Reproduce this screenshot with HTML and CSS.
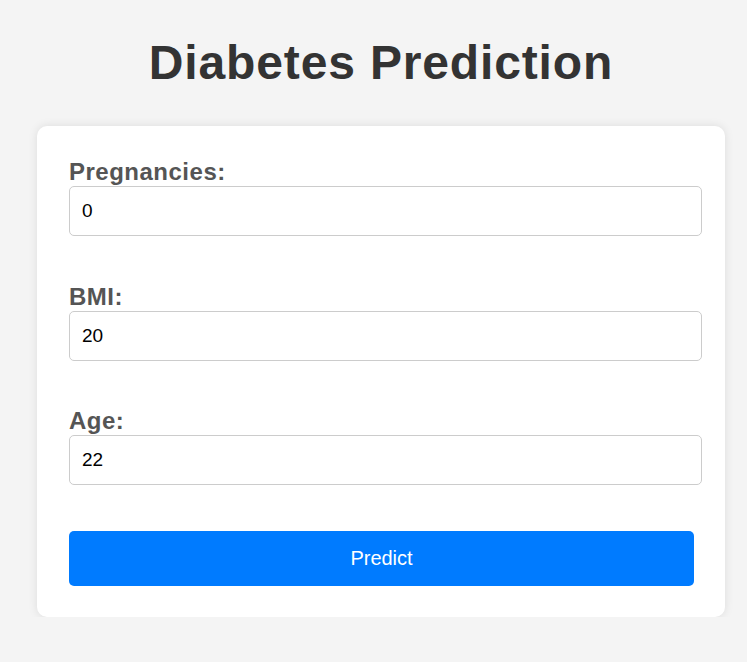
FILE: index.html
```html
<!DOCTYPE html>
<html lang="en">
<head>
<meta charset="utf-8">
<title>Diabetes Prediction</title>
<link rel="stylesheet" href="styles.css">
</head>
<body>
<div class="page">
  <h1 class="title">Diabetes Prediction</h1>
  <form class="card">
    <div class="field">
      <label class="label" for="preg">Pregnancies:</label>
      <input class="input" id="preg" type="text" value="0">
    </div>
    <div class="field">
      <label class="label" for="bmi">BMI:</label>
      <input class="input" id="bmi" type="text" value="20">
    </div>
    <div class="field">
      <label class="label" for="age">Age:</label>
      <input class="input" id="age" type="text" value="22">
    </div>
    <button class="btn" type="button">Predict</button>
  </form>
</div>
</body>
</html>
```

FILE: styles.css
```css
* { box-sizing: border-box; }
html, body { margin: 0; padding: 0; }
body {
  background: #f4f4f4;
  font-family: "Liberation Sans", Arial, sans-serif;
}
.page {
  width: 688px;
  margin-left: 37px;
  padding-top: 33px;
}
.title {
  margin: 0 0 34px;
  text-align: center;
  font-size: 48px;
  line-height: 59px;
  font-weight: bold;
  letter-spacing: 0.85px;
  color: #333;
}
.card {
  background: #fff;
  border-radius: 10px;
  box-shadow: 0 0 10px rgba(0, 0, 0, 0.1);
  padding: 32px 32px 31px;
}
.field {
  margin-bottom: 47px;
}
.field:nth-child(2),
.field:nth-child(3) {
  margin-bottom: 46px;
}
.label {
  display: block;
  font-size: 24px;
  line-height: 28px;
  font-weight: bold;
  letter-spacing: 0.5px;
  color: #555;
}
.input {
  display: block;
  width: 633px;
  height: 50px;
  margin: 0;
  padding: 0 12px;
  border: 1px solid #ccc;
  border-radius: 5px;
  background: #fff;
  font-family: "Liberation Sans", Arial, sans-serif;
  font-size: 19px;
  color: #000;
  outline: none;
}
.btn {
  display: block;
  width: 625px;
  height: 55px;
  margin: 0;
  border: none;
  border-radius: 5px;
  background: #007bff;
  color: #fff;
  font-family: "Liberation Sans", Arial, sans-serif;
  font-size: 20px;
  cursor: pointer;
}
```
